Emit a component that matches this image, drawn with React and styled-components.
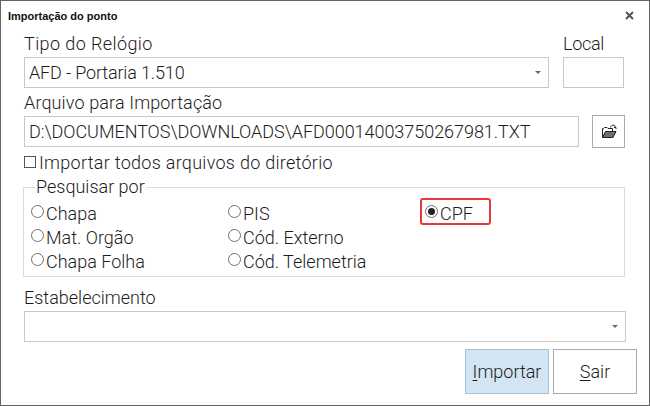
import React from "react";
import styled, { createGlobalStyle } from "styled-components";

const GlobalStyle = createGlobalStyle`
  html, body {
    margin: 0;
    padding: 0;
    background: #fff;
  }
`;

const Dialog = styled.div`
  width: 650px;
  height: 406px;
  box-sizing: border-box;
  border: 1px solid #646464;
  background: #fff;
  font-family: "Roboto", "Liberation Sans", sans-serif;
  font-weight: 300;
  font-size: 18px;
  color: #1c1c1c;
  overflow: hidden;
`;

const TitleBar = styled.div`
  display: flex;
  justify-content: space-between;
  align-items: center;
  height: 29px;
  padding: 0 15px 0 7px;
  font-family: "Liberation Sans", sans-serif;
  font-size: 11px;
  font-weight: 700;
  color: #111;
`;

const Body = styled.div`
  display: flex;
  flex-direction: column;
  padding: 0 12px 0 23px;
`;

const Row = styled.div`
  display: flex;
  gap: ${(p) => p.$gap || 0}px;
  align-items: ${(p) => p.$align || "flex-end"};
  margin-top: ${(p) => p.$top || 0}px;
`;

const Field = styled.div`
  display: flex;
  flex-direction: column;
  width: ${(p) => p.$width}px;
`;

const Label = styled.label`
  height: 27px;
  line-height: 27px;
  white-space: nowrap;
  letter-spacing: ${(p) => p.$spacing || 0}px;
`;

const Box = styled.div`
  display: flex;
  align-items: center;
  justify-content: space-between;
  box-sizing: border-box;
  width: ${(p) => p.$width}px;
  height: 31px;
  padding: 0 7px 0 4px;
  border: 1px solid #c8c8c8;
  background: #fff;
  white-space: nowrap;
  letter-spacing: ${(p) => p.$spacing || 0}px;
`;

const Caret = styled.span`
  width: 0;
  height: 0;
  border-left: 3px solid transparent;
  border-right: 3px solid transparent;
  border-top: 3px solid #6a6a6a;
`;

const FolderButton = styled.button`
  display: flex;
  align-items: center;
  justify-content: center;
  box-sizing: border-box;
  width: 33px;
  height: 33px;
  margin: 0 0 -1px 13px;
  padding: 0;
  border: 1px solid #ababab;
  background: #fff;
`;

const CheckRow = styled.div`
  display: flex;
  align-items: center;
  gap: 3px;
  height: 24px;
  margin-top: 3px;
  letter-spacing: 0.28px;
`;

const CheckBox = styled.span`
  width: 10px;
  height: 10px;
  border: 1px solid #555;
`;

const Group = styled.fieldset`
  box-sizing: border-box;
  width: 602px;
  height: 100px;
  margin: 3px 0 0 -1px;
  padding: 0 7px;
  border: 1px solid #dcdcdc;
  min-inline-size: 0;
`;

const Legend = styled.legend`
  margin-left: 4px;
  padding: 0 1px;
  line-height: 20px;
`;

const RadioGrid = styled.div`
  display: grid;
  grid-template-columns: 197px 197px 1fr;
  grid-auto-rows: 24px;
  margin-top: 4px;
`;

const Radio = styled.div`
  position: relative;
  display: flex;
  align-items: center;
  gap: 2px;
  height: 24px;

  ${(p) =>
    p.$marked &&
    `&::after {
      content: "";
      position: absolute;
      left: -5px;
      top: -3px;
      width: 67px;
      height: 23px;
      border: 2px solid #e6393c;
      border-radius: 3px;
    }`}
`;

const RadioDot = styled.span`
  display: flex;
  align-items: center;
  justify-content: center;
  box-sizing: border-box;
  width: 13px;
  height: 13px;
  margin-top: -3px;
  border: 1px solid #6e6e6e;
  border-radius: 50%;

  &::before {
    content: "";
    display: ${(p) => (p.$on ? "block" : "none")};
    width: 7px;
    height: 7px;
    border-radius: 50%;
    background: #222;
  }
`;

const Footer = styled.div`
  display: flex;
  justify-content: flex-end;
  gap: 4px;
  margin-top: 7px;
`;

const Action = styled.button`
  box-sizing: border-box;
  width: 84px;
  height: 45px;
  padding: 0;
  border: 1px solid ${(p) => (p.$primary ? "#9cc3e0" : "#ababab")};
  background: ${(p) => (p.$primary ? "#d3e4f2" : "#fff")};
  font: inherit;
  color: inherit;

  u {
    text-underline-offset: 2px;
  }
`;

const Close = () => (
  <svg width="9" height="9" viewBox="0 0 9 9">
    <path d="M1 1 L8 8 M8 1 L1 8" stroke="#555" strokeWidth="2" />
  </svg>
);

const FolderIcon = () => (
  <svg width="16" height="15" viewBox="0 0 16 15">
    <path d="M1.5 13.5 V4.5 H2.5 L3.5 3.5 H6 L7 4.5 H11.5 V7" fill="none" stroke="#222" />
    <path d="M1.5 13.5 L4.5 7.5 H15 L12 13.5 Z" fill="#6e6e6e" stroke="#222" />
    <path d="M9.5 3.5 C10 1.5 12 0.5 13.5 1.5 L14.5 3.5 M13 3.5 H15 V5" fill="none" stroke="#222" />
  </svg>
);

const options = [
  ["Chapa", "PIS", "CPF"],
  ["Mat. Orgão", "Cód. Externo", null],
  ["Chapa Folha", "Cód. Telemetria", null],
];

const App = () => {
  return (
    <Dialog>
      <GlobalStyle />
      <TitleBar>
        <span>Importação do ponto</span>
        <Close />
      </TitleBar>
      <Body>
        <Row $gap={14}>
          <Field $width={525}>
            <Label $spacing={0.4}>Tipo do Relógio</Label>
            <Box $width={525} $spacing={-0.15}>
              AFD - Portaria 1.510
              <Caret />
            </Box>
          </Field>
          <Field $width={61}>
            <Label $spacing={-0.3}>Local</Label>
            <Box $width={61} />
          </Field>
        </Row>
        <Row $top={1}>
          <Field $width={555}>
            <Label $spacing={0.13}>Arquivo para Importação</Label>
            <Box $width={555} $spacing={-0.04}>D:\DOCUMENTOS\DOWNLOADS\AFD00014003750267981.TXT</Box>
          </Field>
          <FolderButton aria-label="Abrir">
            <FolderIcon />
          </FolderButton>
        </Row>
        <CheckRow>
          <CheckBox />
          Importar todos arquivos do diretório
        </CheckRow>
        <Group>
          <Legend>Pesquisar por</Legend>
          <RadioGrid>
            {options.flat().map((name, i) =>
              name ? (
                <Radio key={name} $marked={name === "CPF"}>
                  <RadioDot $on={name === "CPF"} />
                  {name}
                </Radio>
              ) : (
                <span key={i} />
              )
            )}
          </RadioGrid>
        </Group>
        <Row $top={7}>
          <Field $width={602}>
            <Label>Estabelecimento</Label>
            <Box $width={602}>
              <span />
              <Caret />
            </Box>
          </Field>
        </Row>
        <Footer>
          <Action $primary>
            <u>I</u>mportar
          </Action>
          <Action>
            <u>S</u>air
          </Action>
        </Footer>
      </Body>
    </Dialog>
  );
};

export default App;
